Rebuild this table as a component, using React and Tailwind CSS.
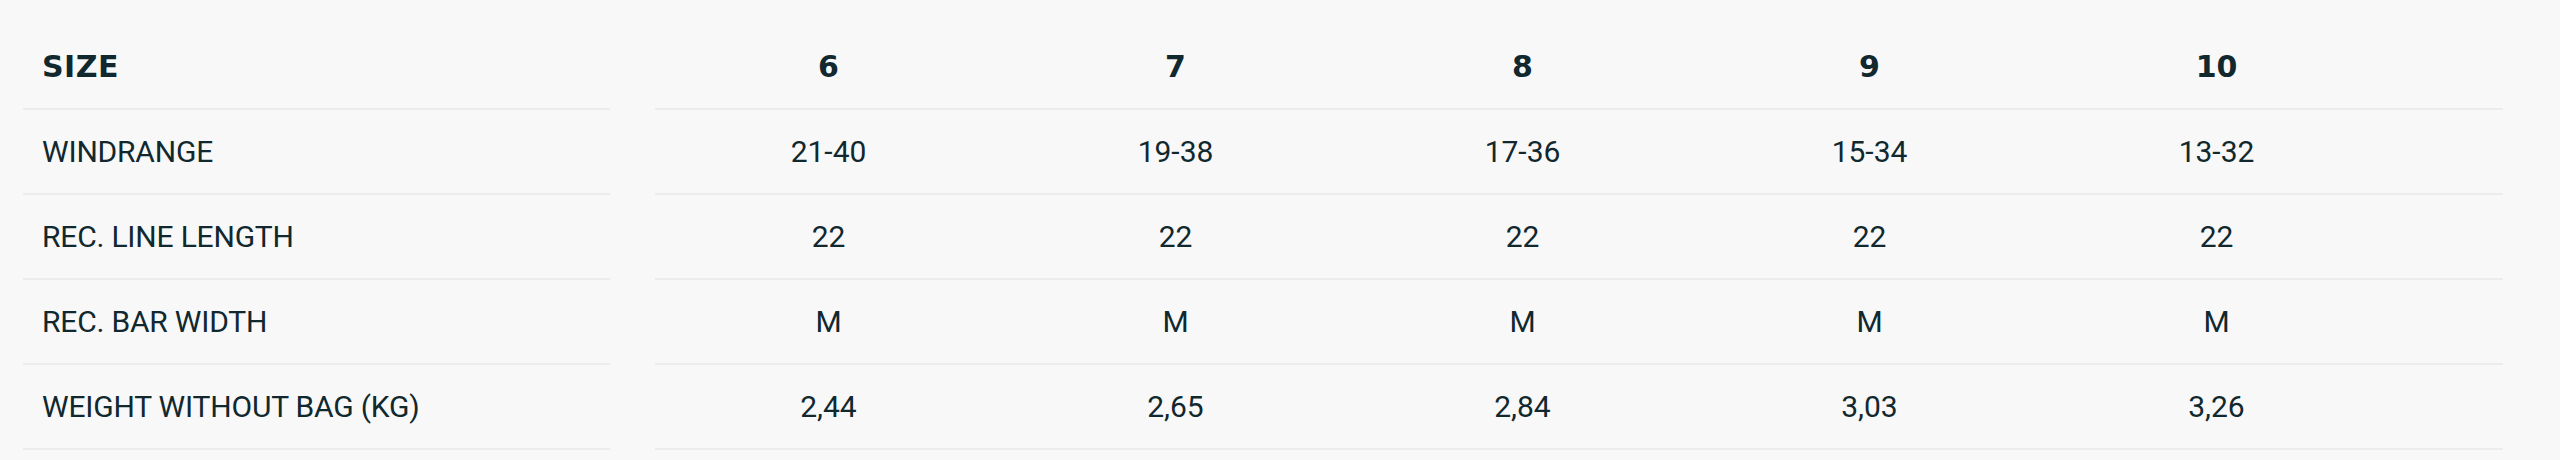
const sizes = ["6", "7", "8", "9", "10"];

const rows = [
  { label: "WINDRANGE", values: ["21-40", "19-38", "17-36", "15-34", "13-32"] },
  { label: "REC. LINE LENGTH", values: ["22", "22", "22", "22", "22"] },
  { label: "REC. BAR WIDTH", values: ["M", "M", "M", "M", "M"] },
  { label: "WEIGHT WITHOUT BAG (KG)", values: ["2,44", "2,65", "2,84", "3,03", "3,26"] },
];

export default function App() {
  return (
    <div className="w-[2560px] h-[460px] bg-[#f8f8f8] text-[#10282e] pt-[25px] pl-[23px] flex gap-[45px] font-['Roboto',sans-serif]">
      {/* label column */}
      <div className="w-[587px] flex flex-col">
        <div className="h-[85px] flex items-center pl-[19px] border-b-2 border-[#ececec]">
          <span className="font-['DejaVu_Sans',sans-serif] font-bold text-[30px] tracking-[0.5px]">
            SIZE
          </span>
        </div>
        {rows.map((row) => (
          <div
            key={row.label}
            className="h-[85px] flex items-center pl-[19px] border-b-2 border-[#ececec] text-[30px] tracking-[-0.2px]"
          >
            {row.label}
          </div>
        ))}
      </div>

      {/* values table */}
      <div className="w-[1848px] flex flex-col">
        <div className="h-[85px] grid grid-cols-[repeat(5,347px)_1fr] items-center border-b-2 border-[#ececec]">
          {sizes.map((s) => (
            <span
              key={s}
              className="text-center font-['DejaVu_Sans',sans-serif] font-bold text-[30px]"
            >
              {s}
            </span>
          ))}
          <span />
        </div>
        {rows.map((row) => (
          <div
            key={row.label}
            className="h-[85px] grid grid-cols-[repeat(5,347px)_1fr] items-center border-b-2 border-[#ececec] text-[30px]"
          >
            {row.values.map((v, i) => (
              <span key={i} className="text-center">
                {v}
              </span>
            ))}
            <span />
          </div>
        ))}
      </div>
    </div>
  );
}
